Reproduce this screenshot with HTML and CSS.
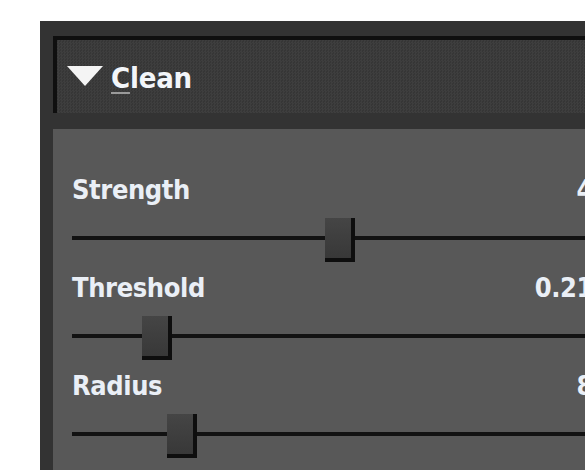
FILE: index.html
```html
<!DOCTYPE html>
<html>
<head>
<meta charset="utf-8">
<link rel="stylesheet" href="styles.css">
</head>
<body>
<div class="panel">
  <div class="header">
    <svg class="tri" width="36" height="20" viewBox="0 0 36 20"><polygon points="0,0 36,0 18,20" fill="#f4f4f4"/></svg>
    <span class="title"><span class="mn">C</span>lean</span>
  </div>
  <div class="content">
    <div class="group">
      <div class="labelrow"><span>Strength</span><span>4</span></div>
      <div class="slider"><div class="track"></div><div class="thumb" style="left:253px"></div></div>
    </div>
    <div class="group">
      <div class="labelrow"><span>Threshold</span><span>0.21</span></div>
      <div class="slider"><div class="track"></div><div class="thumb" style="left:70px"></div></div>
    </div>
    <div class="group">
      <div class="labelrow"><span>Radius</span><span>8</span></div>
      <div class="slider"><div class="track"></div><div class="thumb" style="left:95px"></div></div>
    </div>
  </div>
</div>
</body>
</html>
```

FILE: styles.css
```css
html, body {
  margin: 0;
  padding: 0;
  background: #ffffff;
  overflow: hidden;
  width: 585px;
  height: 470px;
}
.panel {
  margin: 21px 0 0 40px;
  width: 600px;
  height: 470px;
  background: #333333;
  padding: 15px 0 0 13px;
  box-sizing: border-box;
}
.header {
  height: 77px;
  box-sizing: border-box;
  border-top: 4px solid #0f0f0f;
  border-left: 4px solid #0f0f0f;
  background-color: #3a3a3a;
  background-image: repeating-conic-gradient(#3e3e3e 0 25%, #363636 0 50%);
  background-size: 3px 3px;
  display: flex;
  align-items: center;
  padding-left: 10px;
  padding-bottom: 2px;
  gap: 8px;
}
.tri {
  display: block;
}
.title {
  font-family: "DejaVu Sans Condensed", "DejaVu Sans", sans-serif;
  font-weight: bold;
  font-size: 29px;
  line-height: 32px;
  color: #f2f5f9;
  letter-spacing: -0.2px;
  padding-top: 4px;
}
.mn {
  text-decoration: underline;
  text-decoration-color: #9a9a9a;
  text-underline-offset: 4px;
  text-decoration-thickness: 2px;
}
.content {
  margin-top: 16px;
  background: #585858;
  height: 400px;
  padding: 47px 0 0 19px;
  box-sizing: border-box;
  width: 540px;
}
.group {
  display: flex;
  flex-direction: column;
}
.labelrow {
  display: flex;
  justify-content: space-between;
  height: 28px;
  line-height: 28px;
  font-family: "DejaVu Sans Condensed", "DejaVu Sans", sans-serif;
  font-weight: bold;
  font-size: 27px;
  color: #eaeff6;
  letter-spacing: -0.4px;
}
.slider {
  position: relative;
  height: 70px;
}
.track {
  position: absolute;
  left: 0;
  right: -40px;
  top: 32px;
  height: 4px;
  background: #121212;
}
.thumb {
  position: absolute;
  top: 14px;
  width: 26px;
  height: 40px;
  background: linear-gradient(#454545, #383838);
  border-right: 4px solid #0e0e0e;
  border-bottom: 4px solid #0e0e0e;
}
```
